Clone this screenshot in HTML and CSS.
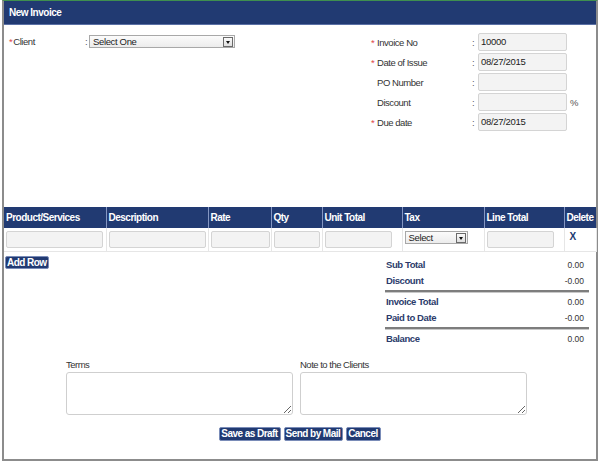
FILE: index.html
```html
<!DOCTYPE html>
<html>
<head>
<meta charset="utf-8">
<link rel="stylesheet" href="styles.css">
</head>
<body>
<div class="frame">
  <div class="header">New Invoice</div>
  <div class="top">
    <div class="client">
      <div class="crow">
        <span class="clabel"><span class="star">*</span>Client</span>
        <span class="colon">:</span>
        <div class="sel sel-client"><span>Select One</span><span class="arrow"></span></div>
      </div>
    </div>
    <div class="fields">
      <div class="frow"><span class="req">*</span><span class="flabel">Invoice No</span><span class="fcolon">:</span><div class="inp">10000</div></div>
      <div class="frow"><span class="req">*</span><span class="flabel">Date of Issue</span><span class="fcolon">:</span><div class="inp">08/27/2015</div></div>
      <div class="frow"><span class="req"></span><span class="flabel">PO Number</span><span class="fcolon">:</span><div class="inp"></div></div>
      <div class="frow"><span class="req"></span><span class="flabel">Discount</span><span class="fcolon">:</span><div class="inp"></div><span class="pct">%</span></div>
      <div class="frow"><span class="req">*</span><span class="flabel">Due date</span><span class="fcolon">:</span><div class="inp">08/27/2015</div></div>
    </div>
  </div>
  <table class="items">
    <colgroup>
      <col class="c102"><col class="c102"><col class="c63"><col class="c51"><col class="c80"><col class="c82"><col class="c80"><col class="c32">
    </colgroup>
    <thead>
      <tr><th>Product/Services</th><th>Description</th><th>Rate</th><th>Qty</th><th>Unit Total</th><th>Tax</th><th>Line Total</th><th>Delete</th></tr>
    </thead>
    <tbody>
      <tr>
        <td><div class="cell-inp w97"></div></td>
        <td><div class="cell-inp w97"></div></td>
        <td><div class="cell-inp w59"></div></td>
        <td><div class="cell-inp w46"></div></td>
        <td><div class="cell-inp w67"></div></td>
        <td><div class="sel sel-tax"><span>Select</span><span class="arrow"></span></div></td>
        <td><div class="cell-inp w67"></div></td>
        <td class="del">X</td>
      </tr>
    </tbody>
  </table>
  <div class="below">
    <div class="addwrap"><button class="btn addrow">Add Row</button></div>
    <div class="totals">
      <div class="trow"><span class="tl">Sub Total</span><span class="tv">0.00</span></div>
      <div class="trow"><span class="tl">Discount</span><span class="tv">-0.00</span></div>
      <div class="tline"></div>
      <div class="trow"><span class="tl">Invoice Total</span><span class="tv">0.00</span></div>
      <div class="trow"><span class="tl">Paid to Date</span><span class="tv">-0.00</span></div>
      <div class="tline"></div>
      <div class="trow"><span class="tl">Balance</span><span class="tv">0.00</span></div>
    </div>
  </div>
  <div class="notes">
    <div class="ncol"><div class="nlabel">Terms</div><textarea class="ta"></textarea></div>
    <div class="ncol"><div class="nlabel">Note to the Clients</div><textarea class="ta"></textarea></div>
  </div>
  <div class="actions">
    <button class="btn">Save as Draft</button>
    <button class="btn">Send by Mail</button>
    <button class="btn">Cancel</button>
  </div>
</div>
</body>
</html>
```
FILE: styles.css
```css
html, body { margin: 0; padding: 0; background: #fff; }
body {
  font-family: "Liberation Sans", Arial, sans-serif;
  font-size: 9px;
  color: #333;
}
.frame {
  margin-left: 2px;
  width: 596px;
  height: 461px;
  box-sizing: border-box;
  border: 2px solid #8c8c8c;
  border-top: 1px solid #3f8f4f;
}
.header {
  height: 23px;
  line-height: 23px;
  background: #213a72;
  border-bottom: 1px solid #5a70a5;
  color: #fff;
  font-weight: bold;
  font-size: 10px;
  letter-spacing: -0.5px;
  padding-left: 5px;
}
.top { height: 182px; display: flex; }
.client { width: 367px; padding: 10px 0 0 5px; box-sizing: border-box; }
.crow { display: flex; align-items: center; height: 13px; font-size: 9.5px; letter-spacing: -0.45px; }
.clabel { width: 76px; color: #333; }
.star { color: #e04848; margin-right: 1px; }
.colon { width: 4px; color: #555; }
.sel {
  display: flex; align-items: center; justify-content: space-between;
  box-sizing: border-box; height: 13px;
  border: 1px solid #a8a8a8;
  background: linear-gradient(#fbfbfb, #ececec);
  font-size: 9.5px; letter-spacing: -0.35px; color: #222;
  padding: 0 1px 0 3px;
}
.sel-client { width: 146px; }
.sel-tax { width: 63px; margin: 3px 0 0 2px; }
.arrow {
  width: 10px; height: 10px; box-sizing: border-box;
  border: 1px solid #6a6a6a; background: linear-gradient(#fafafa, #dedede);
  position: relative;
}
.arrow::after {
  content: ""; position: absolute; left: 2px; top: 3px;
  border-left: 2.5px solid transparent; border-right: 2.5px solid transparent;
  border-top: 3px solid #111;
}
.fields { padding-top: 8px; }
.frow { display: flex; align-items: center; height: 18px; margin-bottom: 2px; font-size: 9.5px; letter-spacing: -0.45px; }
.req { width: 6px; color: #e04848; }
.flabel { width: 95px; color: #333; }
.fcolon { width: 6px; color: #555; }
.inp {
  width: 89px; height: 18px; box-sizing: border-box;
  background: #f3f3f3; border: 1px solid #d4d4d4; border-radius: 2px;
  font-size: 9.5px; letter-spacing: -0.3px; line-height: 16px; padding-left: 2px; color: #222;
}
.pct { margin-left: 3px; color: #555; }
.items { border-collapse: collapse; table-layout: fixed; width: 592px; }
.c102 { width: 102px; } .c63 { width: 63px; } .c51 { width: 51px; } .c80 { width: 80px; } .c82 { width: 82px; } .c32 { width: 32px; }
.items th {
  background: #213a72; color: #fff; font-weight: bold; font-size: 10px; letter-spacing: -0.5px;
  text-align: left; height: 21px; padding: 0 0 0 2px; line-height: 12px;
  border-left: 1px solid #8496c2; white-space: nowrap; overflow: hidden;
}
.items th:first-child { border-left: none; }
.items td {
  height: 20px; padding: 0; vertical-align: top;
  border-left: 1px solid #e6e6e6; border-bottom: 1px solid #e6e6e6;
}
.items td:first-child { border-left: none; }
.items td:last-child { border-right: 1px solid #e6e6e6; }
.cell-inp {
  height: 17px; box-sizing: border-box; margin: 3px 0 0 2px;
  background: #f3f3f3; border: 1px solid #d4d4d4; border-radius: 2px;
}
.w97 { width: 97px; } .w59 { width: 59px; } .w46 { width: 46px; } .w67 { width: 67px; }
.items td.del { font-weight: bold; font-size: 10px; color: #213a72; padding: 3px 0 0 5px; line-height: 11px; }
.below { display: flex; justify-content: space-between; align-items: flex-start; }
.addwrap { display: flex; padding: 4px 0 0 1px; }
.btn {
  display: block;
  font-family: inherit; font-weight: bold; font-size: 10px; letter-spacing: -0.55px; color: #fff;
  background: #213a72; border: 1px solid #7a8cb8; border-radius: 2px;
  height: 14px; padding: 0 2px 0 1px; line-height: 12px; margin: 0; cursor: pointer;
}
.addrow { height: 13px; line-height: 11px; }
.totals { width: 204px; margin-right: 7px; padding-top: 5px; }
.trow { display: flex; justify-content: space-between; align-items: center; height: 16px; line-height: 16px; }
.tl { font-weight: bold; font-size: 9.5px; letter-spacing: -0.4px; color: #2b3b6b; padding-left: 1px; }
.tv { font-size: 8.5px; color: #333; padding-right: 5px; }
.tline { height: 2px; background: #7d7d7d; margin: 1px 0 1px; border-bottom: 1px solid #c8c8c8; }
.notes { display: flex; gap: 7px; padding-left: 62px; margin-top: 12px; }
.ncol { width: 227px; }
.nlabel { font-size: 9.5px; letter-spacing: -0.5px; line-height: 12px; margin-bottom: 1px; color: #333; }
.ta {
  display: block; width: 227px; height: 43px; box-sizing: border-box; margin: 0;
  border: 1px solid #cfcfcf; border-radius: 3px; background: #fff;
}
.actions { display: flex; justify-content: center; gap: 3px; margin-top: 12px; }
```
